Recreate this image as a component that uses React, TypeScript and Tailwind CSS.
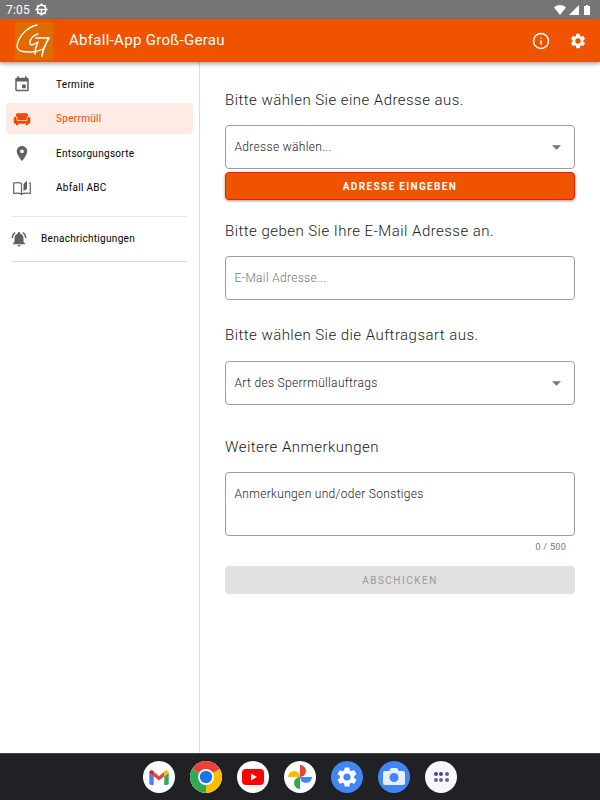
import { ReactNode } from "react";
import { Info } from "lucide-react";

const GEAR =
  "M19.14 12.94c.04-.3.06-.61.06-.94s-.02-.64-.07-.94l2.03-1.58a.49.49 0 0 0 .12-.61l-1.92-3.32a.49.49 0 0 0-.59-.22l-2.39.96c-.5-.38-1.03-.7-1.62-.94l-.36-2.54a.48.48 0 0 0-.48-.41h-3.84a.48.48 0 0 0-.47.41l-.36 2.54c-.59.24-1.13.57-1.62.94l-2.39-.96a.48.48 0 0 0-.59.22L2.74 8.87a.48.48 0 0 0 .12.61l2.03 1.58c-.05.3-.09.63-.09.94s.02.64.07.94l-2.03 1.58a.49.49 0 0 0-.12.61l1.92 3.32c.12.22.37.29.59.22l2.39-.96c.5.38 1.03.7 1.62.94l.36 2.54c.05.24.24.41.48.41h3.84c.24 0 .44-.17.47-.41l.36-2.54c.59-.24 1.13-.56 1.62-.94l2.39.96c.22.08.47 0 .59-.22l1.92-3.32a.48.48 0 0 0-.12-.61zM12 15.6A3.6 3.6 0 1 1 12 8.4a3.6 3.6 0 0 1 0 7.2z";

const MatIcon = ({ d, size = 18 }: { d: string; size?: number }) => (
  <svg width={size} height={size} viewBox="0 0 24 24" fill="currentColor">
    <path d={d} fillRule="evenodd" />
  </svg>
);

const StatusBar = () => (
  <div className="flex h-[19px] items-center justify-between bg-[#757575] pl-[6px] pr-[10px] text-white">
    <div className="flex items-center gap-[5px]">
      <span className="text-[12px] leading-none tracking-[0.2px]">7:05</span>
      <svg width="13" height="13" viewBox="0 0 24 24" fill="none" stroke="white">
        <circle cx="12" cy="12" r="8" strokeWidth="3" />
        <path d="M4 12h16" strokeWidth="2.500" />
        <path d="M12 12v8" strokeWidth="2.500" />
        <path d="M12 1v3M12 20v3M1 12h3M20 12h3M4.200 4.200l2 2M17.800 17.800l2 2M19.800 4.200l-2 2M6.200 17.800l-2 2" strokeWidth="3" />
      </svg>
    </div>
    <div className="flex items-center gap-[3px]">
      <svg width="12" height="10" viewBox="0 0 12 10"><path d="M0 2.500C3.400-.8 8.600-.8 12 2.500L6 10z" fill="white" /></svg>
      <svg width="10" height="10" viewBox="0 0 10 10"><path d="M10 0v10H0z" fill="white" /></svg>
      <svg width="6" height="10" viewBox="0 0 6 10" className="ml-[2px]"><path d="M2 0h2v1h2v9H0V1h2z" fill="white" /></svg>
    </div>
  </div>
);

const Logo = () => (
  <div className="h-[38px] w-[38px] bg-[#e06c00]">
    <svg viewBox="0 0 38 38" width="38" height="38" fill="none" stroke="#fff" strokeLinecap="round" strokeLinejoin="round">
      <path d="M22 3C12 5 3 15 2 24c0 6 8 6 14 6 4 0 8-1 12-3" strokeWidth="1.300" />
      <path d="M23 12c-5 1-9 6-8 10 1 2 5 0 8-2-2 4-3 8-3 12" strokeWidth="1.500" />
      <path d="M21 16h13c-3 5-6 11-7 18" strokeWidth="1.700" />
    </svg>
  </div>
);

const AppBar = () => (
  <header className="relative z-10 flex h-[43px] items-center bg-[#f05300] pl-[15px] pr-[13px] text-white shadow-[0_2px_4px_rgba(0,0,0,0.35)]">
    <Logo />
    <div className="ml-[16px] flex-1 text-[15px] font-normal tracking-[0.3px]">Abfall-App Groß-Gerau</div>
    <Info size={18} strokeWidth={2} className="mr-[19px]" />
    <MatIcon d={GEAR} />
  </header>
);

const NavItem = ({ icon, label, active }: { icon: ReactNode; label: string; active?: boolean }) => (
  <div className={`flex h-[31px] items-center rounded-[4px] pl-[7px] ${active ? "bg-[#fdebe4] text-[#f04a00]" : "text-black"}`}>
    <div className={`flex w-[18px] justify-center ${active ? "" : "text-[#616161]"}`}>{icon}</div>
    <span className="ml-[25px] text-[10px] font-normal tracking-[0.3px]">{label}</span>
  </div>
);

const BookIcon = () => (
  <svg width="18" height="15" viewBox="0 0 18 15" fill="none" stroke="currentColor" strokeWidth="1.200">
    <path d="M8.500 3.500C6.500 2.500 3 2.500 .7 3v10.500c2.300-.5 5.800-.5 7.800.8zM8.500 3.500v10.800c2-1.300 5.500-1.300 8.800-.8V3h-1.500" />
    <path d="M10.500 11V4l3.500-3.500V9z" fill="currentColor" stroke="none" />
  </svg>
);

const Sidebar = () => (
  <aside className="flex w-[200px] shrink-0 flex-col border-r border-[#dcdcdc] px-[6px] pt-[7px]">
    <div className="flex flex-col gap-[3.300px]">
      <NavItem icon={<MatIcon d="M17 12h-5v5h5v-5zM16 1v2H8V1H6v2H5c-1.110 0-1.990.9-1.990 2L3 19c0 1.100.89 2 2 2h14c1.100 0 2-.9 2-2V5c0-1.100-.9-2-2-2h-1V1h-2zm3 18H5V8h14v11z" size={19} />} label="Termine" />
      <NavItem icon={<MatIcon d="M21 10c-1.100 0-2 .9-2 2v3H5v-3c0-1.100-.9-2-2-2s-2 .9-2 2v5c0 1.100.9 2 2 2h1v2h3v-2h10v2h3v-2h1c1.100 0 2-.9 2-2v-5c0-1.100-.9-2-2-2zm-3-5H6c-1.100 0-2 .9-2 2v2.150c1.160.41 2 1.510 2 2.820V14h12v-2.030c0-1.300.84-2.400 2-2.820V7c0-1.100-.9-2-2-2z" size={19} />} label="Sperrmüll" active />
      <NavItem icon={<MatIcon d="M12 2C8.130 2 5 5.130 5 9c0 5.250 7 13 7 13s7-7.750 7-13c0-3.870-3.130-7-7-7zm0 9.500a2.500 2.500 0 0 1 0-5 2.500 2.500 0 0 1 0 5z" size={19} />} label="Entsorgungsorte" />
      <NavItem icon={<BookIcon />} label="Abfall ABC" />
    </div>
    <div className="mx-[6px] mt-[13px] border-t border-[#e8e8e8]" />
    <div className="mx-[4px] flex h-[44px] items-center text-black">
      <div className="text-[#616161]">
        <MatIcon d="M7.580 4.080L6.150 2.650C3.750 4.480 2.170 7.300 2.030 10.500h2c.15-2.650 1.510-4.970 3.550-6.420zm12.390 6.420h2c-.15-3.200-1.730-6.020-4.120-7.850l-1.420 1.430c2.020 1.450 3.390 3.770 3.540 6.420zM18 11c0-3.070-1.640-5.640-4.500-6.320V4c0-.83-.67-1.500-1.500-1.500s-1.500.67-1.500 1.500v.68C7.630 5.360 6 7.920 6 11v5l-2 2v1h16v-1l-2-2v-5zm-6 11c.14 0 .27-.01.4-.04.65-.14 1.180-.58 1.440-1.180.1-.24.15-.5.15-.78h-4c.01 1.100.9 2 2.010 2z" size={18} />
      </div>
      <span className="ml-[13px] text-[10px] font-normal tracking-[0.3px]">Benachrichtigungen</span>
    </div>
    <div className="mx-[6px] border-t border-[#dcdcdc]" />
  </aside>
);

const Heading = ({ children, className }: { children: ReactNode; className: string }) => (
  <h2 className={`text-[15px] leading-[20px] font-light tracking-[0.46px] text-[#212121] ${className}`}>{children}</h2>
);

const SelectBox = ({ label }: { label: string }) => (
  <div className="flex h-[44px] items-center rounded-[4px] border border-[#9e9e9e] pl-[8.500px] pr-[13px]">
    <span className="flex-1 text-[12px] font-light tracking-[0.32px] text-[#212121]">{label}</span>
    <svg width="9" height="5" viewBox="0 0 10 5"><path d="M0 0h10L5 5z" fill="#757575" /></svg>
  </div>
);

const Form = () => (
  <main className="flex-1 px-[25px] pt-[28px]">
    <Heading className="">Bitte wählen Sie eine Adresse aus.</Heading>
    <div className="mt-[15px]">
      <SelectBox label="Adresse wählen..." />
    </div>
    <button className="mt-[3px] flex h-[28px] w-full items-center justify-center rounded-[4px] border border-[#f01c00] bg-[#f05300] text-[10px] font-bold tracking-[1.350px] text-white shadow-[0_1px_3px_rgba(0,0,0,0.4)]">
      ADRESSE EINGEBEN
    </button>
    <Heading className="mt-[21px]">Bitte geben Sie Ihre E-Mail Adresse an.</Heading>
    <div className="mt-[15px] flex h-[44px] items-center rounded-[4px] border border-[#9e9e9e] pl-[8.500px] text-[12px] font-light tracking-[0.32px] text-[#757575]">
      E-Mail Adresse...
    </div>
    <Heading className="mt-[25px]">Bitte wählen Sie die Auftragsart aus.</Heading>
    <div className="mt-[16px]">
      <SelectBox label="Art des Sperrmüllauftrags" />
    </div>
    <Heading className="mt-[32px]">Weitere Anmerkungen</Heading>
    <div className="mt-[15px] h-[64px] rounded-[4px] border border-[#9e9e9e] pl-[8.500px] pt-[13px] text-[12px] leading-[16px] font-light tracking-[0.32px] text-[#212121]">
      Anmerkungen und/oder Sonstiges
    </div>
    <div className="mt-[5px] pr-[9px] text-right text-[9px] leading-[12px] tracking-[0.3px] text-[#757575]">0 / 500</div>
    <button className="mt-[13px] flex h-[28px] w-full items-center justify-center rounded-[4px] bg-[#e0e0e0] text-[10px] font-normal tracking-[1.500px] text-[#9a9a9a]">
      ABSCHICKEN
    </button>
  </main>
);

const DockIcon = ({ children, bg }: { children: ReactNode; bg: string }) => (
  <div className={`flex h-[32px] w-[32px] items-center justify-center overflow-hidden rounded-full ${bg}`}>{children}</div>
);

const Dock = () => (
  <footer className="flex h-[47px] items-center justify-center gap-[15px] border-t border-[#444] bg-[#202124]">
    <DockIcon bg="bg-white">
      <svg width="20" height="15" viewBox="0 0 22 17" fill="none">
        <path d="M0 3v12a2 2 0 0 0 2 2h3V7z" fill="#4285f4" />
        <path d="M22 3v12a2 2 0 0 1-2 2h-3V7z" fill="#34a853" />
        <path d="M5 7v-5l6 5 6-5v5l-6 5z" fill="#ea4335" />
        <path d="M0 3c0-3 3-3.500 5-2v6z" fill="#c5221f" />
        <path d="M22 3c0-3-3-3.500-5-2v6z" fill="#fbbc04" />
      </svg>
    </DockIcon>
    <DockIcon bg="bg-white">
      <svg width="32" height="32" viewBox="0 0 32 32">
        <path d="M16 16L2.100 8A16 16 0 0 1 29.900 8z" fill="#ea4335" />
        <path d="M16 16L29.900 8A16 16 0 0 1 16 32z" fill="#fbbc04" />
        <path d="M16 16L16 32A16 16 0 0 1 2.100 8z" fill="#34a853" />
        <circle cx="16" cy="16" r="8" fill="white" />
        <circle cx="16" cy="16" r="6.200" fill="#1a73e8" />
      </svg>
    </DockIcon>
    <DockIcon bg="bg-white">
      <svg width="22" height="16" viewBox="0 0 22 16">
        <rect width="22" height="16" rx="4" fill="#f00" />
        <path d="M9 4.500v7l6-3.500z" fill="white" />
      </svg>
    </DockIcon>
    <DockIcon bg="bg-white">
      <svg width="24" height="24" viewBox="0 0 24 24">
        <path d="M12 12A6 6 0 0 0 0 12z" fill="#fbbc04" />
        <path d="M12 12A6 6 0 0 0 12 0z" fill="#ea4335" />
        <path d="M12 12A6 6 0 0 0 24 12z" fill="#4285f4" />
        <path d="M12 12A6 6 0 0 0 12 24z" fill="#34a853" />
      </svg>
    </DockIcon>
    <DockIcon bg="bg-[#4285f4] text-white">
      <MatIcon d={GEAR} size={24} />
    </DockIcon>
    <DockIcon bg="bg-[#4285f4]">
      <svg width="22" height="20" viewBox="0 0 22 20">
        <path d="M2 4h4l2-3h6l2 3h4a2 2 0 0 1 2 2v10a2 2 0 0 1-2 2H2a2 2 0 0 1-2-2V6a2 2 0 0 1 2-2z" fill="#e8eefc" />
        <circle cx="11" cy="10.500" r="4.500" fill="#4285f4" />
      </svg>
    </DockIcon>
    <DockIcon bg="bg-[#f8f5fc]">
      <div className="grid grid-cols-3 gap-[1.500px]">
        <span className="h-[4px] w-[4px] rounded-full bg-[#3c4a8c]" />
        <span className="h-[4px] w-[4px] rounded-full bg-[#3c4a8c]" />
        <span className="h-[4px] w-[4px] rounded-full bg-[#6a5a8c]" />
        <span className="h-[4px] w-[4px] rounded-full bg-[#5a6a8c]" />
        <span className="h-[4px] w-[4px] rounded-full bg-[#5a6a8c]" />
        <span className="h-[4px] w-[4px] rounded-full bg-[#5a6a8c]" />
      </div>
    </DockIcon>
  </footer>
);

export default function App() {
  return (
    <div className="flex h-[800px] w-[600px] flex-col overflow-hidden bg-white font-['Roboto',sans-serif]">
      <StatusBar />
      <AppBar />
      <div className="flex flex-1">
        <Sidebar />
        <Form />
      </div>
      <Dock />
    </div>
  );
}
